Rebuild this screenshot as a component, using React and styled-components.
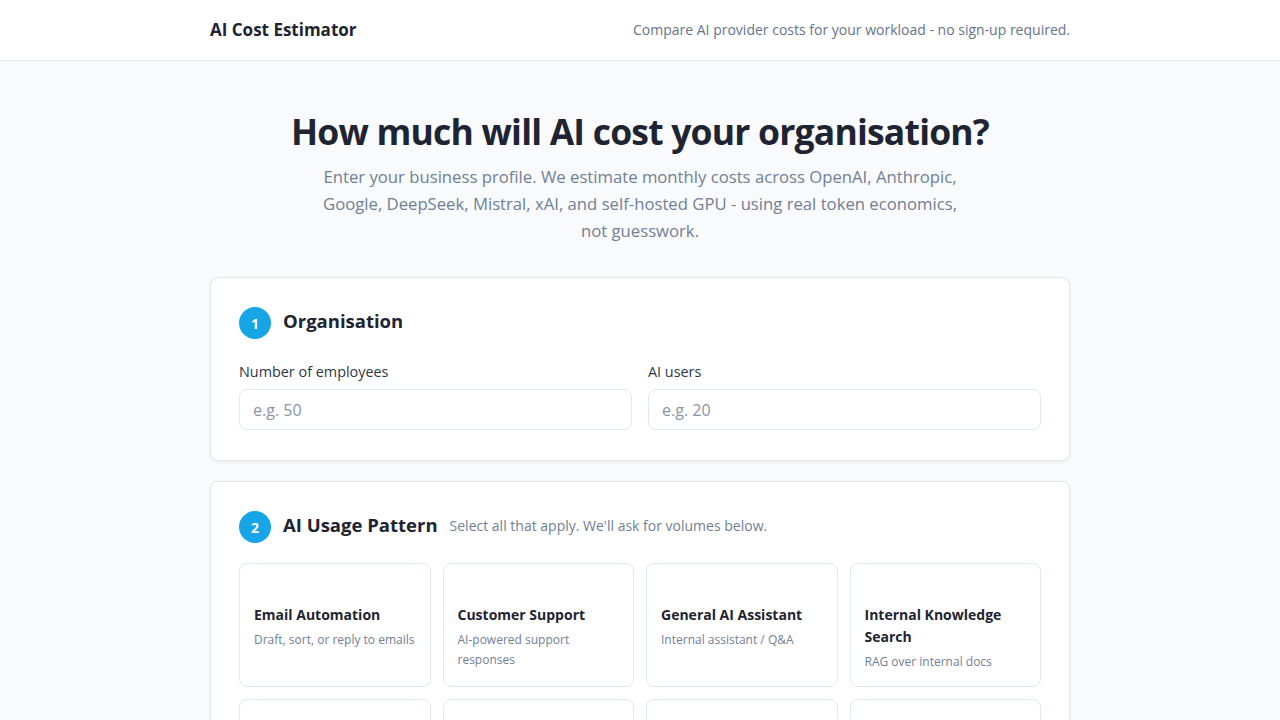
import React from 'react'
import styled, { createGlobalStyle } from 'styled-components'

const GlobalStyle = createGlobalStyle`
    * { box-sizing: border-box; }
    body {
        margin: 0;
        background: #f8fafc;
        font-family: "Open Sans", "Noto Sans", sans-serif;
        color: #1e293b;
    }
`

const Header = styled.header`
    background: #ffffff;
    border-bottom: 1px solid #e2e8f0;
    height: 61px;
`

const HeaderInner = styled.div`
    width: 860px;
    margin: 0 auto;
    height: 100%;
    display: flex;
    align-items: center;
    justify-content: space-between;
    padding-bottom: 1px;
`

const Brand = styled.div`
    font-size: 17px;
    font-weight: 700;
    color: #1e2432;
`

const Tagline = styled.div`
    font-size: 14px;
    color: #64748b;
`

const Main = styled.main`
    width: 860px;
    margin: 0 auto;
    padding-top: 46px;
`

const Hero = styled.section`
    text-align: center;
    margin-bottom: 33px;
`

const Title = styled.h1`
    margin: 0 0 8px;
    font-size: 35.5px;
    font-weight: 700;
    letter-spacing: -0.8px;
    color: #1e2432;
    line-height: 48px;
`

const Lead = styled.p`
    margin: 0 auto;
    max-width: 660px;
    font-size: 16.7px;
    line-height: 27px;
    color: #718096;
`

const Section = styled.section`
    background: #ffffff;
    border: 1px solid #e2e8f0;
    border-radius: 8px;
    box-shadow: 0 1px 3px rgba(15, 23, 42, 0.06);
    padding: 29px 28px 30px;
    margin-bottom: 20px;
`

const SectionHead = styled.div`
    display: flex;
    align-items: flex-start;
    gap: 12px;
    margin-bottom: ${props => props.$space || 23}px;
`

const Step = styled.span`
    width: 32px;
    height: 32px;
    border-radius: 50%;
    background: #16a5e6;
    color: #ffffff;
    font-size: 14px;
    font-weight: 700;
    display: flex;
    align-items: center;
    justify-content: center;
    flex-shrink: 0;
`

const SectionTitle = styled.h2`
    margin: 0;
    font-size: 18.5px;
    line-height: 27px;
    font-weight: 700;
    color: #1e2432;
`

const Hint = styled.span`
    font-size: 14px;
    line-height: 29px;
    color: #718096;
`

const FieldGrid = styled.div`
    display: grid;
    grid-template-columns: 1fr 1fr;
    gap: 16px;
`

const Field = styled.label`
    display: flex;
    flex-direction: column;
    gap: 7px;
`

const FieldLabel = styled.span`
    font-size: 14.4px;
    line-height: 20px;
    color: #2d3748;
`

const Input = styled.input`
    height: 41px;
    border: 1px solid #e2e8f0;
    border-radius: 8px;
    padding: 0 13px;
    font-family: inherit;
    font-size: 16px;
    color: #1e2432;
    background: #ffffff;
    outline: none;

    &::placeholder {
        color: #8a94a6;
    }
`

const TileGrid = styled.div`
    display: grid;
    grid-template-columns: repeat(4, 1fr);
    gap: 12px;
`

const Tile = styled.button`
    text-align: left;
    background: #ffffff;
    border: 1px solid #e2e8f0;
    border-radius: 8px;
    padding: 14px 14px 14px;
    min-height: 124px;
    font-family: inherit;
    cursor: pointer;
    display: flex;
    flex-direction: column;
    align-items: flex-start;
`

const TileIcon = styled.div`
    height: 22px;
    margin-bottom: 4px;
    font-size: 20px;
`

const TileTitle = styled.div`
    font-size: 14px;
    font-weight: 700;
    line-height: 22px;
    color: #1e2432;
    margin-bottom: 4px;
`

const TileDesc = styled.div`
    font-size: 12px;
    line-height: 20px;
    color: #718096;
`

const useCases = [
    { title: 'Email Automation', desc: 'Draft, sort, or reply to emails' },
    { title: 'Customer Support', desc: 'AI-powered support responses' },
    { title: 'General AI Assistant', desc: 'Internal assistant / Q&A' },
    { title: 'Internal Knowledge Search', desc: 'RAG over internal docs' },
    { title: 'Document Processing', desc: 'Summarise and extract from files' },
    { title: 'Content Generation', desc: 'Marketing copy, blogs, posts' },
    { title: 'Code Assistant', desc: 'Help developers write code' },
    { title: 'Data Analysis', desc: 'Reports and insights from data' },
]

export default function App() {
    return (
        <>
            <GlobalStyle />
            <Header>
                <HeaderInner>
                    <Brand>AI Cost Estimator</Brand>
                    <Tagline>Compare AI provider costs for your workload - no sign-up required.</Tagline>
                </HeaderInner>
            </Header>

            <Main>
                <Hero>
                    <Title>How much will AI cost your organisation?</Title>
                    <Lead>
                        Enter your business profile. We estimate monthly costs across OpenAI, Anthropic,
                        Google, DeepSeek, Mistral, xAI, and self-hosted GPU - using real token economics,
                        not guesswork.
                    </Lead>
                </Hero>

                <Section>
                    <SectionHead>
                        <Step>1</Step>
                        <SectionTitle>Organisation</SectionTitle>
                    </SectionHead>
                    <FieldGrid>
                        <Field>
                            <FieldLabel>Number of employees</FieldLabel>
                            <Input placeholder="e.g. 50" />
                        </Field>
                        <Field>
                            <FieldLabel>AI users</FieldLabel>
                            <Input placeholder="e.g. 20" />
                        </Field>
                    </FieldGrid>
                </Section>

                <Section>
                    <SectionHead $space={20}>
                        <Step>2</Step>
                        <SectionTitle>AI Usage Pattern</SectionTitle>
                        <Hint>Select all that apply. We'll ask for volumes below.</Hint>
                    </SectionHead>
                    <TileGrid>
                        {useCases.map(u => (
                            <Tile key={u.title}>
                                <TileIcon />
                                <TileTitle>{u.title}</TileTitle>
                                <TileDesc>{u.desc}</TileDesc>
                            </Tile>
                        ))}
                    </TileGrid>
                </Section>
            </Main>
        </>
    )
}
